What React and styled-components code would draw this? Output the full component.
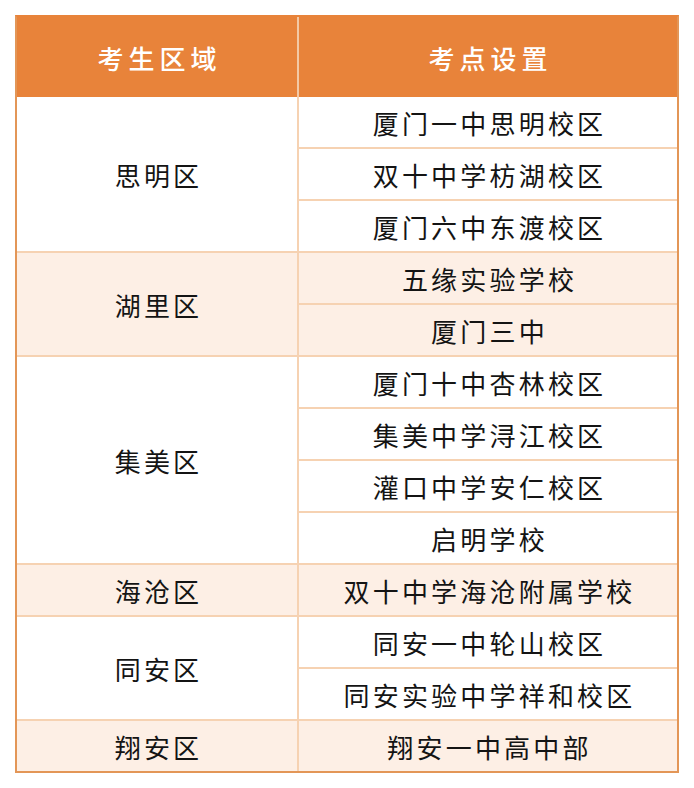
import React from "react";
import styled, { createGlobalStyle } from "styled-components";

const GlobalStyle = createGlobalStyle`
  html, body { margin: 0; padding: 0; background: #ffffff; }
  body { font-family: "Noto Sans CJK SC", "Noto Sans", sans-serif; }
`;

const Page = styled.div`
  padding: 15px 0 0 15px;
`;

const Table = styled.div`
  width: 664px;
  box-sizing: border-box;
  border: 2px solid #e39657;
  border-top-color: #e8833a;
  background: #f6d2b2;
  display: flex;
  flex-direction: column;
`;

const Header = styled.div`
  display: grid;
  grid-template-columns: 280px 1fr;
  column-gap: 2px;
  background: #f3c9a5;
`;

const HeadCell = styled.div`
  height: 80px;
  background: #e8833a;
  color: #ffffff;
  font-size: 26px;
  font-weight: 500;
  letter-spacing: 5px;
  padding-left: 5px;
  display: flex;
  align-items: center;
  justify-content: center;
`;

const Body = styled.div`
  display: flex;
  flex-direction: column;
  gap: 2px;
`;

const Group = styled.div`
  display: grid;
  grid-template-columns: 280px 1fr;
  column-gap: 2px;
`;

const Cell = styled.div`
  background: ${(p) => (p.$striped ? "#fdefe5" : "#ffffff")};
  color: #141414;
  font-size: 26px;
  letter-spacing: 3.2px;
  padding-left: 3px;
  display: flex;
  align-items: center;
  justify-content: center;
  white-space: nowrap;
`;

const SiteList = styled.div`
  display: flex;
  flex-direction: column;
  gap: 2px;
`;

const SiteCell = styled(Cell)`
  height: 50px;
`;

const data = [
  { district: "思明区", sites: ["厦门一中思明校区", "双十中学枋湖校区", "厦门六中东渡校区"] },
  { district: "湖里区", sites: ["五缘实验学校", "厦门三中"] },
  { district: "集美区", sites: ["厦门十中杏林校区", "集美中学浔江校区", "灌口中学安仁校区", "启明学校"] },
  { district: "海沧区", sites: ["双十中学海沧附属学校"] },
  { district: "同安区", sites: ["同安一中轮山校区", "同安实验中学祥和校区"] },
  { district: "翔安区", sites: ["翔安一中高中部"] },
];

export default function App() {
  return (
    <>
      <GlobalStyle />
      <Page>
        <Table>
          <Header>
            <HeadCell>考生区域</HeadCell>
            <HeadCell>考点设置</HeadCell>
          </Header>
          <Body>
            {data.map((g, i) => {
              const striped = i % 2 === 1;
              return (
                <Group key={g.district}>
                  <Cell $striped={striped}>{g.district}</Cell>
                  <SiteList>
                    {g.sites.map((s) => (
                      <SiteCell key={s} $striped={striped}>
                        {s}
                      </SiteCell>
                    ))}
                  </SiteList>
                </Group>
              );
            })}
          </Body>
        </Table>
      </Page>
    </>
  );
}
